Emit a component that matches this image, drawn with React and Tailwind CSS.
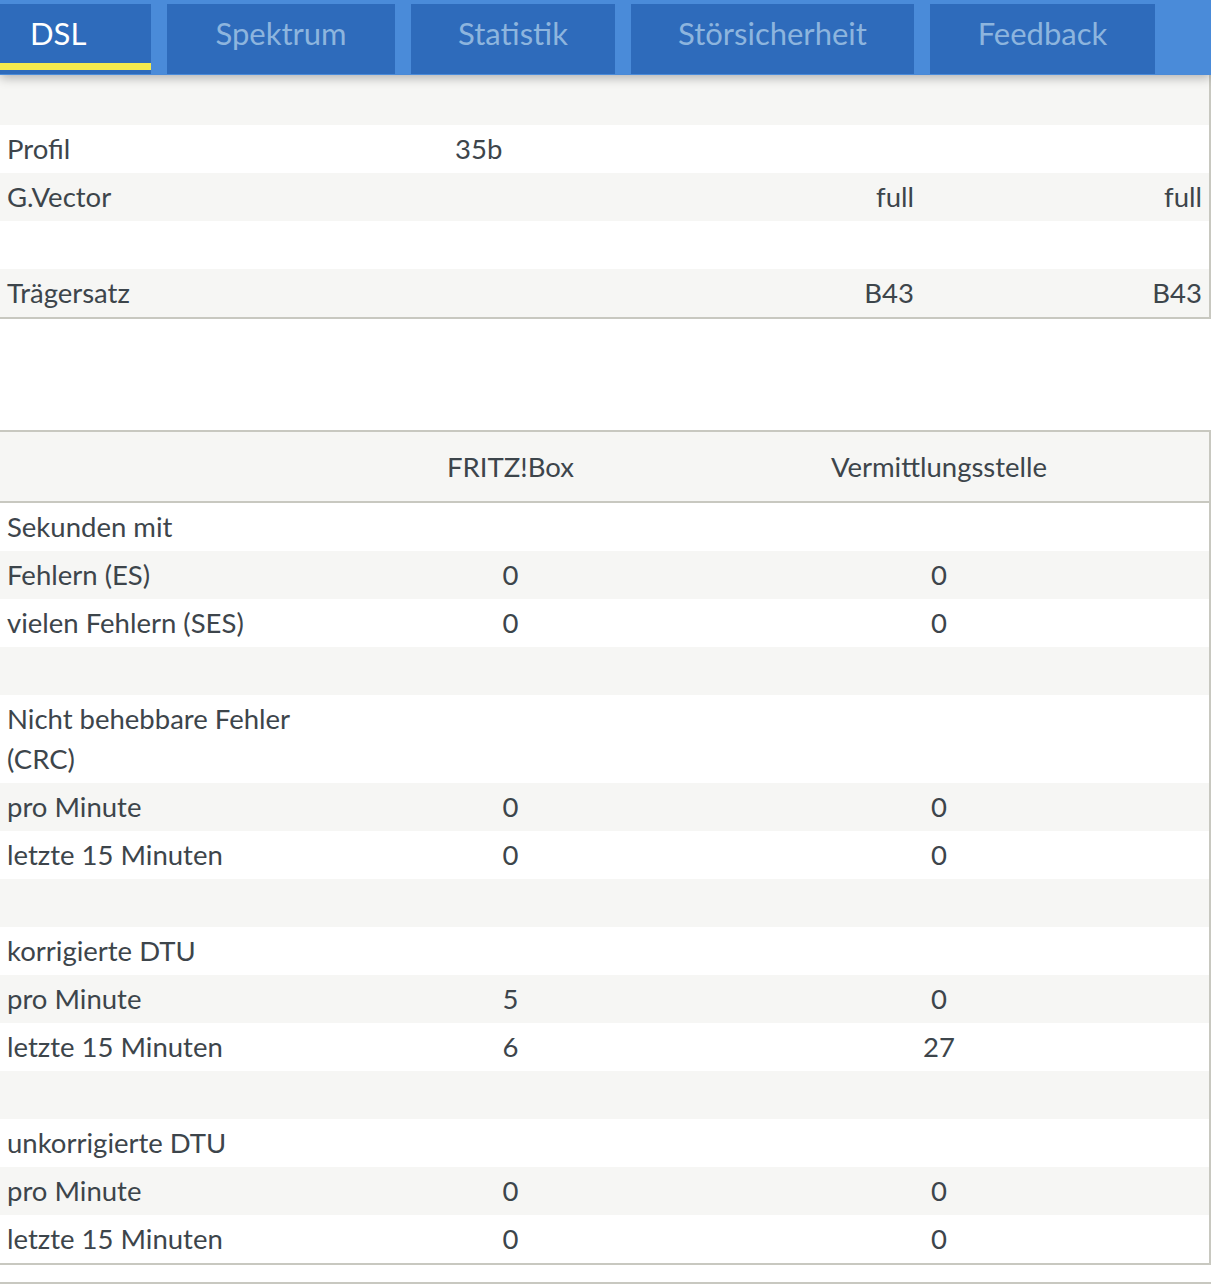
const tabs = [
  { label: "DSL", w: "w-[151px] justify-start pl-[30px]", active: true },
  { label: "Spektrum", w: "w-[228px] justify-center" },
  { label: "Statistik", w: "w-[204px] justify-center" },
  { label: "Störsicherheit", w: "w-[283px] justify-center" },
  { label: "Feedback", w: "w-[225px] justify-center" },
];

const lineRows = [
  { label: "", a: "", b: "", c: "" },
  { label: "Profil", a: "35b", b: "", c: "" },
  { label: "G.Vector", a: "", b: "full", c: "full" },
  { label: "", a: "", b: "", c: "" },
  { label: "Trägersatz", a: "", b: "B43", c: "B43" },
];

const errorRows = [
  { label: "Sekunden mit" },
  { label: "Fehlern (ES)", a: "0", b: "0" },
  { label: "vielen Fehlern (SES)", a: "0", b: "0" },
  { label: "" },
  { label: "Nicht behebbare Fehler (CRC)" },
  { label: "pro Minute", a: "0", b: "0" },
  { label: "letzte 15 Minuten", a: "0", b: "0" },
  { label: "" },
  { label: "korrigierte DTU" },
  { label: "pro Minute", a: "5", b: "0" },
  { label: "letzte 15 Minuten", a: "6", b: "27" },
  { label: "" },
  { label: "unkorrigierte DTU" },
  { label: "pro Minute", a: "0", b: "0" },
  { label: "letzte 15 Minuten", a: "0", b: "0" },
];

function TabBar() {
  return (
    <div className="relative z-10 flex h-[75px] gap-4 bg-[#4a8bd9] pt-[4px] shadow-[0_3px_10px_rgba(0,0,0,0.28)]">
      {tabs.map((t) => (
        <div
          key={t.label}
          className={`relative flex h-[70px] items-start bg-[#2e6bbb] pt-[9px] text-[31px] leading-[40px] ${t.w} ${
            t.active ? "text-white" : "text-[#8db5de]"
          }`}
        >
          {t.label}
          {t.active && (
            <div className="absolute bottom-[4px] left-0 right-0 h-[7px] bg-[#f4ea4f]" />
          )}
        </div>
      ))}
    </div>
  );
}

function LineTable() {
  return (
    <div className="border-b-2 border-r-2 border-[#c8c8c0]">
      {lineRows.map((r, i) => (
        <div
          key={i}
          className={`grid grid-cols-[448px_473px_1fr] items-center ${
            i === 0 ? "h-[50px]" : "h-[48px]"
          } ${i % 2 === 0 ? "bg-[#f6f6f4]" : "bg-white"}`}
        >
          <div className="px-[7px]">{r.label}</div>
          <div className="px-[7px]">
            {r.a && <span>{r.a}</span>}
            {r.b && <span className="block text-right">{r.b}</span>}
          </div>
          <div className="px-[7px] text-right">{r.c}</div>
        </div>
      ))}
    </div>
  );
}

function ErrorTable() {
  return (
    <div className="border-y-2 border-r-2 border-[#c8c8c0]">
      <div className="grid h-[71px] grid-cols-[306px_409px_448px_1fr] items-center border-b-2 border-[#c8c8c0] bg-[#f6f6f4]">
        <div />
        <div className="text-center">FRITZ!Box</div>
        <div className="text-center">Vermittlungsstelle</div>
        <div />
      </div>
      {errorRows.map((r, i) => (
        <div
          key={i}
          className={`grid min-h-[48px] grid-cols-[306px_409px_448px_1fr] py-[4px] ${
            i % 2 === 1 ? "bg-[#f6f6f4]" : "bg-white"
          }`}
        >
          <div className="px-[7px]">{r.label}</div>
          <div className="text-center">{r.a}</div>
          <div className="text-center">{r.b}</div>
          <div />
        </div>
      ))}
    </div>
  );
}

export default function App() {
  return (
    <div className="min-h-[1285px] bg-white font-['Lato','Liberation_Sans',sans-serif] text-[27.5px] leading-[40px] text-[#3d454b]">
      <TabBar />
      <LineTable />
      <div className="h-[111px]" />
      <ErrorTable />
      <div className="mt-[17px] border-t-2 border-[#c8c8c0]" />
    </div>
  );
}
